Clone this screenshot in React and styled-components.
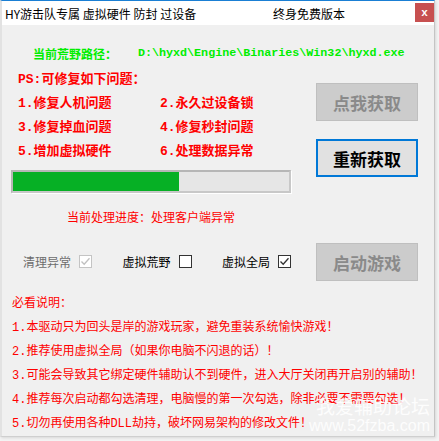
import React from "react";
import styled, { createGlobalStyle } from "styled-components";

const Global = createGlobalStyle`
  html, body { margin: 0; padding: 0; background: #f4f4f4; }
  body { width: 439px; height: 441px; overflow: hidden; }
`;

const UI = `"Noto Sans CJK SC", "Microsoft YaHei", sans-serif`;
const SONG = `"Liberation Mono", "Noto Sans CJK SC", monospace`;

const Window = styled.div`
  position: relative;
  width: 435px;
  height: 437px;
  background: #f0f0f0;
  border-top: 1px solid #1a7fd4;
  border-left: 2px solid #e2e2e2;
  border-right: 1px solid #c4c4c4;
  border-bottom: 1px solid #cfcfcf;
  box-sizing: border-box;
  box-shadow: 1px 1px 3px rgba(0,0,0,0.12);
  overflow: hidden;
  display: flex;
  flex-direction: column;
`;

const TitleBar = styled.div`
  height: 24px;
  background: #fff;
  display: flex;
  align-items: center;
  padding-left: 3px;
  font-family: ${UI};
  font-size: 12px;
  color: #000;
`;

const TitleText = styled.span`
  width: ${p => p.$w}px;
  white-space: pre;
`;

const CloseBtn = styled.div`
  margin-left: auto;
  margin-right: 0;
  align-self: flex-start;
  margin-top: 2px;
  width: 19px;
  height: 19px;
  background: #c75050;
  color: #fff;
  display: flex;
  align-items: center;
  justify-content: center;
  font-family: ${SONG};
  font-weight: 700;
  font-size: 11px;
`;

const Body = styled.div`
  flex: 1;
  display: flex;
  flex-direction: column;
  padding: 16px 0 0 9px;
`;

const PathRow = styled.div`
  height: 24px;
  display: flex;
  align-items: center;
  padding-left: 22px;
  color: #00ee00;
  font-weight: 700;
  font-size: 12px;
`;

const PathLabel = styled.span`
  font-family: ${UI};
  width: 105px;
`;

const PathValue = styled.span`
  font-family: "Liberation Mono", monospace;
  font-size: 11.7px;
  font-weight: 700;
`;

const Upper = styled.div`
  display: flex;
  margin-top: 3px;
`;

const LeftCol = styled.div`
  width: 280px;
  display: flex;
  flex-direction: column;
`;

const RightCol = styled.div`
  display: flex;
  flex-direction: column;
  padding-top: 15px;
  margin-left: 25px;
`;

const FixTitle = styled.div`
  height: 24px;
  line-height: 24px;
  padding-left: 7px;
  color: #ff0000;
  font-family: ${SONG};
  font-weight: 700;
  font-size: 13px;
`;

const FixGrid = styled.div`
  display: grid;
  grid-template-columns: 142px 1fr;
  padding-left: 7px;
`;

const FixItem = styled.div`
  height: 24px;
  line-height: 24px;
  color: #ff0000;
  font-family: ${SONG};
  font-weight: 700;
  font-size: 13px;
  white-space: nowrap;
`;

const Progress = styled.div`
  margin-top: 6px;
  height: 23px;
  box-sizing: border-box;
  border: 2px solid #b6b6b6;
  border-right-color: #c8c8c8;
  border-bottom-color: #c8c8c8;
  box-shadow: 1px 1px 0 #ffffff;
  background: #e6e6e6;
  display: flex;
`;

const Fill = styled.div`
  background: #06b025;
  height: 100%;
`;

const Status = styled.div`
  margin-top: 12px;
  height: 24px;
  line-height: 24px;
  text-align: center;
  color: #ff0000;
  font-family: ${UI};
  font-size: 12px;
`;

const CheckRow = styled.div`
  margin-top: 20px;
  height: 24px;
  display: flex;
  align-items: center;
  justify-content: space-between;
  padding-left: 12px;
`;

const CheckItem = styled.label`
  display: flex;
  align-items: center;
  gap: 8px;
  font-family: ${UI};
  font-size: 12px;
  color: ${p => (p.$disabled ? "#6d6d6d" : "#000")};
`;

const Box = styled.span`
  width: 13px;
  height: 13px;
  box-sizing: border-box;
  border: 1px solid ${p => (p.$disabled ? "#c4c4c4" : "#333")};
  background: #fff;
  display: flex;
  align-items: center;
  justify-content: center;
`;

const Btn = styled.div`
  width: 102px;
  height: 38px;
  box-sizing: border-box;
  margin-top: ${p => p.$mt || 0}px;
  display: flex;
  align-items: center;
  justify-content: center;
  font-family: "Noto Sans CJK SC", serif;
  font-weight: 700;
  font-size: 17px;
  letter-spacing: 0px;
  background: ${p => (p.$active ? "#e1e1e1" : "#cccccc")};
  border: ${p => (p.$active ? "2px solid #0078d7" : "1px solid #bfbfbf")};
  color: ${p => (p.$active ? "#000" : "#8a8a8a")};
`;

const Notes = styled.div`
  margin-top: 11px;
  padding-left: 1px;
  display: flex;
  flex-direction: column;
`;

const NoteLine = styled.div`
  height: 24px;
  line-height: 24px;
  color: #ff0000;
  font-family: ${SONG};
  font-size: 12px;
  white-space: nowrap;
`;

const Watermark = styled.div`
  position: absolute;
  right: 4px;
  bottom: 1px;
  display: flex;
  flex-direction: column;
  align-items: flex-end;
  color: rgba(255, 255, 255, 0.88);
  font-family: ${UI};
  pointer-events: none;
`;

const WmTitle = styled.span`
  font-size: 19px;
  line-height: 23px;
  letter-spacing: 0px;
`;

const WmUrl = styled.span`
  font-family: "Liberation Sans", Arial, sans-serif;
  font-size: 16px;
  line-height: 18px;
`;

const Check = ({ color }) => (
  <svg width="11" height="11" viewBox="0 0 11 11">
    <path d="M1.5 5.5 L4.2 8.3 L9.5 2.2" fill="none" stroke={color} strokeWidth="1.3" />
  </svg>
);

const CheckBox = ({ label, checked, disabled }) => (
  <CheckItem $disabled={disabled}>
    {label}
    <Box $disabled={disabled}>{checked && <Check color={disabled ? "#c0c0c0" : "#333"} />}</Box>
  </CheckItem>
);

const fixes = [
  "1.修复人机问题", "2.永久过设备锁",
  "3.修复掉血问题", "4.修复秒封问题",
  "5.增加虚拟硬件", "6.处理数据异常",
];

const notes = [
  "必看说明：",
  "1.本驱动只为回头是岸的游戏玩家，避免重装系统愉快游戏！",
  "2.推荐使用虚拟全局（如果你电脑不闪退的话）！",
  "3.可能会导致其它绑定硬件辅助认不到硬件，进入大厅关闭再开启别的辅助！",
  "4.推荐每次启动都勾选清理，电脑慢的第一次勾选，除非必要不需要勾选！",
  "5.切勿再使用各种DLL劫持，破坏网易架构的修改文件！",
];

export default function App() {
  const progress = 0.6;
  return (
    <>
      <Global />
      <Window>
        <TitleBar>
          <TitleText $w={268}>HY游击队专属 虚拟硬件 防封 过设备</TitleText>
          <TitleText>终身免费版本</TitleText>
          <CloseBtn>x</CloseBtn>
        </TitleBar>
        <Body>
          <PathRow>
            <PathLabel>当前荒野路径：</PathLabel>
            <PathValue>D:\hyxd\Engine\Binaries\Win32\hyxd.exe</PathValue>
          </PathRow>
          <Upper>
            <LeftCol>
              <FixTitle>PS:可修复如下问题：</FixTitle>
              <FixGrid>
                {fixes.map(f => <FixItem key={f}>{f}</FixItem>)}
              </FixGrid>
              <Progress>
                <Fill style={{ width: `${progress * 100}%` }} />
              </Progress>
              <Status>当前处理进度：处理客户端异常</Status>
              <CheckRow>
                <CheckBox label="清理异常" checked disabled />
                <CheckBox label="虚拟荒野" />
                <CheckBox label="虚拟全局" checked />
              </CheckRow>
            </LeftCol>
            <RightCol>
              <Btn>点我获取</Btn>
              <Btn $active $mt={18}>重新获取</Btn>
              <Btn $mt={66}>启动游戏</Btn>
            </RightCol>
          </Upper>
          <Notes>
            {notes.map(n => <NoteLine key={n}>{n}</NoteLine>)}
          </Notes>
        </Body>
        <Watermark>
          <WmTitle>我爱辅助论坛</WmTitle>
          <WmUrl>www.52fzba.com</WmUrl>
        </Watermark>
      </Window>
    </>
  );
}
